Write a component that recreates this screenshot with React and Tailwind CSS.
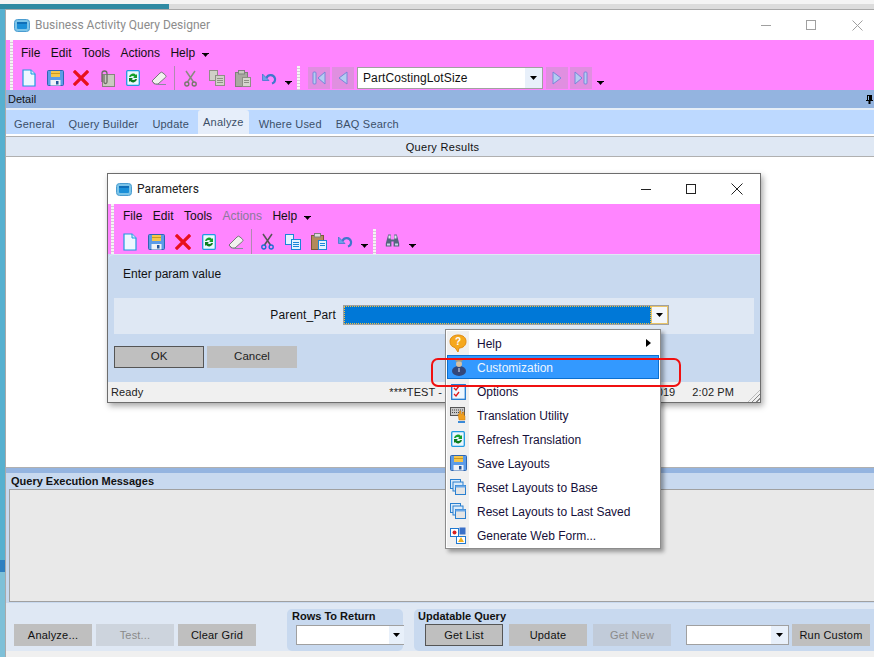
// App.jsx — Business Activity Query Designer with Parameters dialog and context menu
import React from "react";

// ── Icons ───────────────────────────────────────────────────
const AppIcon = () => (
  <svg width="16" height="13" viewBox="0 0 16 13" className="shrink-0">
    <rect x="0.5" y="0.5" width="15" height="12" rx="3" fill="#7cc4e8" stroke="#4a9cd0" />
    <rect x="3" y="3" width="10" height="7" rx="1" fill="#1a8fd8" />
    <rect x="3" y="3" width="10" height="2" fill="#0f6fb8" />
  </svg>
);

const NewDoc = () => (
  <svg width="14" height="18" viewBox="0 0 14 18">
    <path d="M1 1h8l4 4v12H1z" fill="#eef7ff" stroke="#1f9be0" strokeWidth="1.2" />
    <path d="M9 1v4h4" fill="#cfe9fb" stroke="#1f9be0" />
  </svg>
);

const Save = () => (
  <svg width="17" height="16" viewBox="0 0 17 16">
    <rect x="0.5" y="0.5" width="16" height="15" rx="1" fill="#5b9be8" stroke="#2f66b0" />
    <rect x="4" y="1" width="9" height="6" fill="#f6c64a" />
    <rect x="4" y="3" width="9" height="1" fill="#c99a20" />
    <rect x="3.5" y="10" width="10" height="5.5" fill="#eef2f7" />
    <rect x="9" y="11" width="2.5" height="3.5" fill="#24559a" />
  </svg>
);

const RedX = () => (
  <svg width="16" height="16" viewBox="0 0 16 16">
    <path d="M2 2l12 12M14 2L2 14" stroke="#e8101c" strokeWidth="3.2" strokeLinecap="square" />
  </svg>
);

const Clip = () => (
  <svg width="16" height="17" viewBox="0 0 16 17">
    <rect x="3.5" y="4.5" width="12" height="12" fill="#c9c9bf" stroke="#85857c" />
    <path d="M3 12V3.500a2.500 2.500 0 015 0V12a1.500 1.500 0 01-3 0V5" fill="none" stroke="#6e6e66" strokeWidth="1.300" />
  </svg>
);

const Refresh = () => (
  <svg width="14" height="16" viewBox="0 0 14 16">
    <rect x="0.7" y="0.7" width="12.6" height="14.6" rx="1" fill="#eaf6ff" stroke="#1f9be0" strokeWidth="1.3" />
    <path d="M3 7a4 4 0 017-2l1-1v4H7l1.4-1.3A2.4 2.4 0 004.6 7z" fill="#14a02a" />
    <path d="M11 9a4 4 0 01-7 2l-1 1V8h4L5.6 9.3A2.4 2.4 0 009.4 9z" fill="#0b7d1e" />
  </svg>
);

const Eraser = () => (
  <svg width="16" height="14" viewBox="0 0 16 14">
    <path d="M1 10l8-8a2 2 0 013 0l2.5 2.2a1.5 1.5 0 010 2.2L7 13H3.5z" fill="#f1f1ee" stroke="#77777a" />
    <path d="M1 10l3 3" stroke="#77777a" />
    <path d="M5 13.5h10" stroke="#8a8aa0" />
  </svg>
);

const Cut = ({ blue }) => (
  <svg width="13" height="17" viewBox="0 0 13 17">
    <path d="M2 1l7.5 11M11 1L3.5 12" stroke={blue ? "#555" : "#8a8a80"} strokeWidth="1.5" fill="none" />
    <circle cx="2.8" cy="14" r="2" fill="none" stroke={blue ? "#1b6fd0" : "#77776e"} strokeWidth="1.4" />
    <circle cx="10.2" cy="14" r="2" fill="none" stroke={blue ? "#1b6fd0" : "#77776e"} strokeWidth="1.4" />
  </svg>
);

const Copy = ({ blue }) => {
  const stroke = blue ? "#1c86d8" : "#8f8f86";
  const fill = blue ? "#e3f3ff" : "#d0d0c8";
  return (
    <svg width="16" height="16" viewBox="0 0 16 16">
      <rect x="0.5" y="0.5" width="8" height="10" fill={fill} stroke={stroke} />
      <rect x="6.5" y="5.5" width="9" height="10" fill={fill} stroke={stroke} />
      <path d="M8 8.5h6M8 10.5h6M8 12.5h6" stroke={stroke} />
    </svg>
  );
};

const Paste = ({ blue }) => (
  <svg width="16" height="17" viewBox="0 0 16 17">
    <rect x="0.5" y="2.5" width="12" height="14" fill={blue ? "#b38a5c" : "#a8a8a0"} stroke={blue ? "#7a5a38" : "#80807a"} />
    <rect x="3.5" y="0.5" width="6" height="3.5" fill={blue ? "#ddd" : "#c8c8c0"} stroke="#808080" />
    <rect x="7.5" y="7.5" width="8" height="9" fill={blue ? "#e3f3ff" : "#d6d6ce"} stroke={blue ? "#1c86d8" : "#8f8f86"} />
    <path d="M9 10.5h5M9 12.5h5" stroke={blue ? "#1c86d8" : "#8f8f86"} />
  </svg>
);

const Undo = () => (
  <svg width="15" height="13" viewBox="0 0 15 13">
    <path d="M4.500 6A4.500 4.500 0 0113 6.500 4.500 4.500 0 0110 11.500" fill="none" stroke="#3f78cc" strokeWidth="2.200" />
    <path d="M.5 2v6.500H7z" fill="#6aa0ea" stroke="#3f78cc" strokeWidth="0.800" />
  </svg>
);

const Binoculars = () => (
  <svg width="15" height="15" viewBox="0 0 15 14" className="-mt-[2px]">
    <path d="M3.2 1h2.6v5h3.4V1h2.6l2.4 9v3H8.600V8H6.400v5H.8v-3z" fill="#55667f" />
    <rect x="3.500" y="2" width="2" height="3" fill="#dfe6f2" />
    <rect x="9.500" y="2" width="2" height="3" fill="#dfe6f2" />
    <rect x="2" y="10" width="3" height="2" fill="#c8d4e6" />
    <rect x="10" y="10" width="3" height="2" fill="#c8d4e6" />
  </svg>
);

const Caret = () => (
  <svg width="7" height="5" viewBox="0 0 7 5" className="shrink-0">
    <rect x="0" y="0" width="7" height="1" fill="#000" />
    <path d="M1 1h5L3.5 4z" fill="#000" />
  </svg>
);

const DropBtn = ({ className }) => (
  <span className={`flex items-center justify-center ${className}`}>
    <svg width="7" height="4" viewBox="0 0 7 4">
      <path d="M0 0h7L3.5 4z" fill="#000" />
    </svg>
  </span>
);

const Pin = () => (
  <svg width="7" height="9" viewBox="0 0 7 9" className="block">
    <path d="M1 0h5v5h1v1H4.500v3h-2V6H0V5h1z" fill="#000" />
    <rect x="2" y="1" width="1" height="4" fill="#94b4e0" />
  </svg>
);

const NavBtn = ({ dir, bar }) => (
  <span className="w-[22px] h-[22px] bg-[#e08fe0] flex items-center justify-center">
    <svg width="14" height="14" viewBox="0 0 14 14">
      {dir === "left" ? (
        <>
          {bar && <rect x="1" y="1" width="3" height="12" rx="1" fill="#b4cdf2" stroke="#7a86d8" />}
          <path d={bar ? "M13 1v12L6 7z" : "M11 1v12L3 7z"} fill="#b4cdf2" stroke="#7a86d8" />
        </>
      ) : (
        <>
          <path d={bar ? "M1 1v12l7-6z" : "M3 1v12l8-6z"} fill="#b4cdf2" stroke="#7a86d8" />
          {bar && <rect x="10" y="1" width="3" height="12" rx="1" fill="#b4cdf2" stroke="#7a86d8" />}
        </>
      )}
    </svg>
  </span>
);

const HelpIcon = () => (
  <svg width="18" height="19" viewBox="0 0 18 19">
    <path d="M9 1c5 0 8 2.500 8 6.500S14 14 10 14l-1 4-3-4.500C3 13 1 11 1 7.500S4 1 9 1z" fill="#f5a81e" stroke="#e08a10" />
    <text x="9" y="11" textAnchor="middle" fontSize="10" fontWeight="700" fill="#fff" fontFamily="Liberation Sans">?</text>
  </svg>
);

const PersonIcon = () => (
  <svg width="16" height="18" viewBox="0 0 16 18">
    <ellipse cx="8" cy="13" rx="7" ry="5" fill="#33477a" />
    <circle cx="8" cy="6" r="3" fill="#d8c0a0" />
    <rect x="4.500" y="1" width="7" height="2.500" fill="#a89878" />
    <rect x="7.500" y="10" width="1" height="4" fill="#dfe6f2" />
  </svg>
);

const OptionsIcon = () => (
  <svg width="15" height="17" viewBox="0 0 15 17">
    <rect x="0.700" y="1.700" width="13.600" height="14.600" fill="#eef7ff" stroke="#1f78d0" strokeWidth="1.300" />
    <path d="M3 5l2 2 3-4M3 11l2 2 3-4" stroke="#e01818" strokeWidth="1.300" fill="none" />
  </svg>
);

const KeyboardIcon = () => (
  <svg width="17" height="17" viewBox="0 0 17 17">
    <rect x="0.500" y="0.500" width="14" height="8" fill="#c9c9c9" stroke="#555" />
    <path d="M2 3h11M2 5.500h11" stroke="#444" strokeDasharray="1 1" />
    <path d="M8 7h1.500v-3h1.500v3h1.500v-2h1.500v3l1 1v4H9z" fill="#f0a020" stroke="#c87a10" strokeWidth="0.500" />
    <rect x="8" y="14" width="7" height="2" fill="#3a8ad8" />
  </svg>
);

const LayoutsIcon = () => (
  <svg width="16" height="16" viewBox="0 0 16 16">
    <rect x="0.500" y="0.500" width="10" height="9" fill="#dcebf9" stroke="#2a80d0" />
    <rect x="3" y="3" width="10" height="9" fill="#dcebf9" stroke="#2a80d0" />
    <rect x="5.500" y="6.500" width="10" height="9" fill="#e5e5e5" stroke="#2a80d0" />
    <rect x="5.500" y="6.500" width="10" height="2" fill="#6aa8e8" />
  </svg>
);

const WebFormIcon = () => (
  <svg width="16" height="17" viewBox="0 0 16 17">
    <rect x="0.500" y="1.500" width="8" height="8" fill="#fff" stroke="#1f78d0" />
    <circle cx="4.500" cy="5.500" r="2" fill="#d82020" />
    <rect x="9.500" y="0.500" width="6" height="7" fill="#3a70c8" />
    <rect x="6.500" y="9.500" width="9" height="7" fill="#fff" stroke="#1f78d0" />
    <path d="M11 10l3 5H8z" fill="#f0b020" />
  </svg>
);

// ── Small pieces ────────────────────────────────────────────
const Gripper = ({ className = "" }) => (
  <span
    className={`w-[3px] self-stretch shrink-0 bg-[repeating-linear-gradient(to_bottom,#f4f4f4_0,#f4f4f4_2px,#d8c8d8_2px,#d8c8d8_3px)] ${className}`}
  />
);

const Slot = ({ w = "w-[26px]", children }) => (
  <span className={`flex items-center justify-center shrink-0 ${w}`}>{children}</span>
);

const GrayBtn = ({ children, className = "", text = "text-[#111]" }) => (
  <button className={`w-[78px] h-[22px] text-[11px] tracking-[0.2px] flex items-center justify-center shrink-0 ${text} ${className}`}>
    {children}
  </button>
);

const menuRows = [
  ["Help", <HelpIcon />],
  ["Customization", <PersonIcon />],
  ["Options", <OptionsIcon />],
  ["Translation Utility", <KeyboardIcon />],
  ["Refresh Translation", <Refresh />],
  ["Save Layouts", <Save />],
  ["Reset Layouts to Base", <LayoutsIcon />],
  ["Reset Layouts to Last Saved", <LayoutsIcon />],
  ["Generate Web Form...", <WebFormIcon />],
];

const tabs = ["General", "Query Builder", "Update", "Analyze", "Where Used", "BAQ Search"];

// ── Parameters dialog ───────────────────────────────────────
function ParamsDialog() {
  return (
    <div className="absolute left-[107px] top-[173px] w-[654px] h-[230px] border border-[#6d6d6d] bg-[#c8d9ef] flex flex-col shadow-[2px_3px_6px_rgba(0,0,0,0.35)]">
      <div className="h-[30px] bg-white flex items-center pl-[8px] pr-[17px] shrink-0">
        <AppIcon />
        <span className="ml-[5px] text-[12px] text-[#222] font-['Roboto',sans-serif]">Parameters</span>
        <span className="ml-auto flex items-center gap-[35px]">
          <span className="w-[10px] h-px bg-[#222]" />
          <span className="w-[10px] h-[10px] border border-[#222]" />
          <svg width="12" height="12" viewBox="0 0 12 12">
            <path d="M.5.5l11 11M11.500.5l-11 11" stroke="#222" />
          </svg>
        </span>
      </div>
      <div className="h-[50px] bg-[#ff85ff] flex shrink-0">
        <Gripper className="ml-[3px]" />
        <div className="flex-1 flex flex-col">
          <div className="h-[24px] flex items-center pl-[9px] gap-[10.5px] text-[12px] text-[#111]">
            <span>File</span>
            <span>Edit</span>
            <span>Tools</span>
            <span className="text-[#8a7a9a]">Actions</span>
            <span>Help</span>
            <span className="mt-[5px] -ml-[3.5px]"><Caret /></span>
          </div>
          <div className="h-[26px] flex items-center pl-[3px] pt-[1px]">
            <Slot><NewDoc /></Slot>
            <Slot w="w-[27px]"><Save /></Slot>
            <Slot w="w-[25px]"><RedX /></Slot>
            <Slot w="w-[27px]"><Refresh /></Slot>
            <Slot w="w-[27px]"><Eraser /></Slot>
            <span className="w-px h-[25px] bg-[#b08ab0] ml-[2px] mr-[2px]" />
            <Slot><Cut blue /></Slot>
            <Slot><Copy blue /></Slot>
            <Slot><Paste blue /></Slot>
            <Slot><Undo /></Slot>
            <span className="mt-[10px] ml-[3px] mr-[5px]"><Caret /></span>
            <Gripper />
            <Slot w="w-[32px]"><Binoculars /></Slot>
            <span className="mt-[10px] ml-[1px]"><Caret /></span>
          </div>
        </div>
      </div>
      <div className="h-[38px] bg-[#c8d9ef] rounded-tl-[6px] border-t border-[#dfe8f4] flex items-center pl-[15px] text-[12px] text-[#111] shrink-0">
        Enter param value
      </div>
      <div className="mt-[6px] mx-[6px] h-[36px] bg-[#dfe8f4] flex items-center pb-[3px] shrink-0">
        <span className="w-[222px] text-right text-[12px] tracking-[0.15px] text-[#111]">Parent_Part</span>
        <span className="ml-[7px] w-[326px] h-[20px] flex border border-[#a0a0a0]">
          <span className="flex-1 bg-[#0078d7] border border-dotted border-[#f0c040]" />
          <DropBtn className="w-[17px] bg-[#f4f7fb] border border-[#e8c468]" />
        </span>
      </div>
      <div className="flex-1 flex items-center gap-[3px] pl-[6px] pb-[2px]">
        <button className="w-[90px] h-[22px] bg-[#bfbfbf] border border-[#555] text-[11.5px] text-[#222]">OK</button>
        <button className="w-[90px] h-[22px] bg-[#bfbfbf] text-[11.5px] text-[#222]">Cancel</button>
      </div>
      <div className="h-[20px] bg-[#f0f0f0] flex items-center pt-[1px] pl-[3px] pr-[26px] text-[11px] tracking-[0.1px] text-[#222] relative shrink-0">
        <span>Ready</span>
        <span className="ml-[246px]">****TEST - I</span>
        <span className="ml-auto">019</span>
        <span className="ml-[17px]">2:02 PM</span>
        <span className="absolute right-0 bottom-0 w-[12px] h-[12px] bg-[repeating-linear-gradient(135deg,transparent_0,transparent_2px,#888_2px,#888_3px)] [clip-path:polygon(100%_0,100%_100%,0_100%)]" />
      </div>
    </div>
  );
}

// ── Context menu ────────────────────────────────────────────
function ContextMenu() {
  return (
    <div className="absolute left-[445px] top-[329px] w-[216px] h-[220px] bg-white border border-[#8c8c8c] pt-[1px] px-[1px] shadow-[3px_3px_4px_rgba(0,0,0,0.35)] text-[12px]">
      {menuRows.map(([label, icon]) => {
        const active = label === "Customization";
        return (
          <div
            key={label}
            className={`h-[24px] flex items-center relative ${active ? "bg-[#3399ff] text-[#eef6ff] border border-[#0a6fd0]" : "text-[#16103a]"}`}
          >
            <span className={`h-full flex items-center justify-center shrink-0 ${active ? "w-[21px]" : "w-[22px] bg-[#f0f0f0]"}`}>
              {icon}
            </span>
            <span className="ml-[8px] pt-[1px]">{label}</span>
            {label === "Help" && (
              <svg width="5" height="8" viewBox="0 0 5 8" className="ml-auto mr-[8px]">
                <path d="M0 0l5 4-5 4z" fill="#000" />
              </svg>
            )}
          </div>
        );
      })}
    </div>
  );
}

// ── Page ────────────────────────────────────────────────────
export default function App() {
  return (
    <div className="relative w-[874px] h-[657px] overflow-hidden flex flex-col bg-white font-['Liberation_Sans',Arial,sans-serif]">
      {/* desktop behind the window */}
      <div className="h-[9px] flex shrink-0 bg-[#f4f4f4]">
        <div className="w-[169px] flex flex-col">
          <div className="h-[4px]" />
          <div className="flex-1 bg-[#2f8aa3]" />
        </div>
        <div className="flex-1 flex flex-col">
          <div className="h-[4px]" />
          <div className="flex-1 bg-[#dcdcdc]" />
        </div>
      </div>

      <div className="flex-1 flex min-h-0">
        <div className="w-[5px] shrink-0 flex flex-col">
          <div className="h-[551px] bg-[#56b0cf]" />
          <div className="h-[12px] bg-[#2f7fc0]" />
          <div className="flex-1 bg-[#7ec0d8]" />
        </div>

        {/* main window */}
        <div className="flex-1 min-w-0 flex flex-col border-l border-t border-[#a9a9a9]">
          <div className="h-[30px] bg-white flex items-center pl-[8px] shrink-0">
            <AppIcon />
            <span className="ml-[5px] text-[12px] text-[#8c8c8c] font-['Roboto',sans-serif]">
              Business Activity Query Designer
            </span>
            <span className="ml-auto flex items-center">
              <span className="w-[10px] h-px bg-[#a0a0a0]" />
              <span className="ml-[35px] w-[10px] h-[10px] border border-[#a0a0a0]" />
              <svg width="11" height="11" viewBox="0 0 11 11" className="ml-[36px] mr-[11px]">
                <path d="M.5.5l10 10M10.500.5l-10 10" stroke="#a0a0a0" />
              </svg>
            </span>
          </div>

          <div className="h-[50px] bg-[#ff85ff] flex shrink-0">
            <Gripper className="ml-[4px]" />
            <div className="flex-1 flex flex-col">
              <div className="h-[26px] flex items-center pl-[8px] gap-[10.5px] text-[12px] text-[#111]">
                <span>File</span>
                <span>Edit</span>
                <span>Tools</span>
                <span>Actions</span>
                <span>Help</span>
                <span className="mt-[5px] -ml-[3.5px]"><Caret /></span>
              </div>
              <div className="h-[24px] flex items-center pl-[2px]">
                <Slot w="w-[27px]"><NewDoc /></Slot>
                <Slot><Save /></Slot>
                <Slot w="w-[25px]"><RedX /></Slot>
                <Slot w="w-[27px]"><Clip /></Slot>
                <Slot><Refresh /></Slot>
                <Slot><Eraser /></Slot>
                <span className="w-px h-[24px] bg-[#b08ab0] ml-[2px] mr-[2px]" />
                <Slot><Cut /></Slot>
                <Slot w="w-[27px]"><Copy /></Slot>
                <Slot><Paste /></Slot>
                <Slot><Undo /></Slot>
                <span className="mt-[10px] ml-[3px] mr-[5px]"><Caret /></span>
                <Gripper />
                <span className="ml-[8px] flex items-center gap-[2px]">
                  <NavBtn dir="left" bar />
                  <NavBtn dir="left" />
                </span>
                <span className="ml-[3px] w-[186px] h-[22px] bg-white border border-[#a0a0a0] flex items-center text-[12px] tracking-[0.1px] text-[#111] pl-[5px]">
                  <span>PartCostingLotSize</span>
                  <DropBtn className="ml-auto w-[17px] h-full bg-[#e8f0fa]" />
                </span>
                <span className="ml-[3px] flex items-center gap-[2px]">
                  <NavBtn dir="right" />
                  <NavBtn dir="right" bar />
                </span>
                <span className="mt-[10px] ml-[5px]"><Caret /></span>
              </div>
            </div>
          </div>

          <div className="h-[18px] bg-[#94b4e0] flex items-center pl-[2px] pr-[1px] text-[11px] text-[#111] shrink-0">
            <span>Detail</span>
            <span className="ml-auto"><Pin /></span>
          </div>
          <div className="h-[2px] bg-[#e6eef8] shrink-0" />

          <div className="h-[24px] bg-[#bdd9ff] flex items-end pl-[3px] text-[11px] tracking-[0.2px] text-[#3b4f68] shrink-0">
            {tabs.map((t) =>
              t === "Analyze" ? (
                <span key={t} className="h-[24px] px-[5px] bg-[#e6eefa] rounded-t-[3px] pt-[4px] mr-[5px]">
                  {t}
                </span>
              ) : (
                <span key={t} className="h-[24px] flex items-center pt-[4px] px-[5px] mr-[4px]">{t}</span>
              )
            )}
          </div>

          <div className="h-[21px] mt-[2px] bg-[#dfe8f4] border-y border-[#b0b0b0] flex items-center justify-center pl-[5px] pt-[1px] text-[11px] tracking-[0.3px] text-[#111] shrink-0">
            Query Results
          </div>

          {/* results area */}
          <div className="flex-1 bg-white min-h-0" />

          <div className="h-[6px] bg-[#94b4e0] border-t border-[#b0b0b0] shrink-0" />
          <div className="h-[16px] bg-[#c8d9ef] flex items-center pl-[5px] text-[11px] text-[#111] font-bold shrink-0">
            Query Execution Messages
          </div>
          <div className="h-[114px] bg-[#c8d9ef] pl-[3px] pr-0 shrink-0">
            <div className="h-[113px] bg-[#e9e9e9] border border-[#a0a0a0] border-r-0" />
          </div>

          {/* bottom actions */}
          <div className="h-[48px] bg-[#dfe8f4] flex items-end shrink-0">
            <div className="flex items-center gap-[4px] pl-[8px] pb-[5px]">
              <GrayBtn className="bg-[#bfbfbf]">Analyze...</GrayBtn>
              <GrayBtn className="bg-[#cdd4dd]" text="text-[#8a8a8a]">Test...</GrayBtn>
              <GrayBtn className="bg-[#bfbfbf]">Clear Grid</GrayBtn>
            </div>
            <div className="ml-[31px] w-[116px] h-[42px] bg-[#c8d9ef] rounded-[5px] pl-[5px] shrink-0 flex flex-col">
              <span className="text-[11px] leading-[15px] font-bold text-[#111]">Rows To Return</span>
              <span className="ml-[4px] mt-[1px] h-[20px] w-[108px] bg-white border border-[#a0a0a0] border-r-0 flex">
                <DropBtn className="ml-auto w-[15px] bg-[#e8f0fa]" />
              </span>
            </div>
            <div className="ml-[11px] flex-1 h-[42px] bg-[#c8d9ef] rounded-l-[5px] pl-[4px] flex flex-col">
              <span className="text-[11px] leading-[15px] font-bold text-[#111]">Updatable Query</span>
              <div className="flex items-center ml-[7px]">
                <GrayBtn className="bg-[#bfbfbf] border border-[#555]">Get List</GrayBtn>
                <GrayBtn className="ml-[6px] bg-[#bfbfbf]">Update</GrayBtn>
                <GrayBtn className="ml-[6px] bg-[#c1cbd9]" text="text-[#8a8a8a]">Get New</GrayBtn>
                <span className="ml-[15px] w-[103px] h-[20px] bg-white border border-[#a0a0a0] flex">
                  <DropBtn className="ml-auto w-[17px] bg-[#e8f0fa]" />
                </span>
                <GrayBtn className="ml-[3px] bg-[#bfbfbf]">Run Custom</GrayBtn>
              </div>
            </div>
          </div>
          <div className="h-[6px] bg-[#f0f0f0] shrink-0" />
        </div>
      </div>

      <ParamsDialog />
      <ContextMenu />
      {/* red annotation around the Customization row */}
      <div className="absolute left-[431px] top-[358px] w-[250px] h-[29px] border-2 border-[#f01010] rounded-[7px]" />
    </div>
  );
}
